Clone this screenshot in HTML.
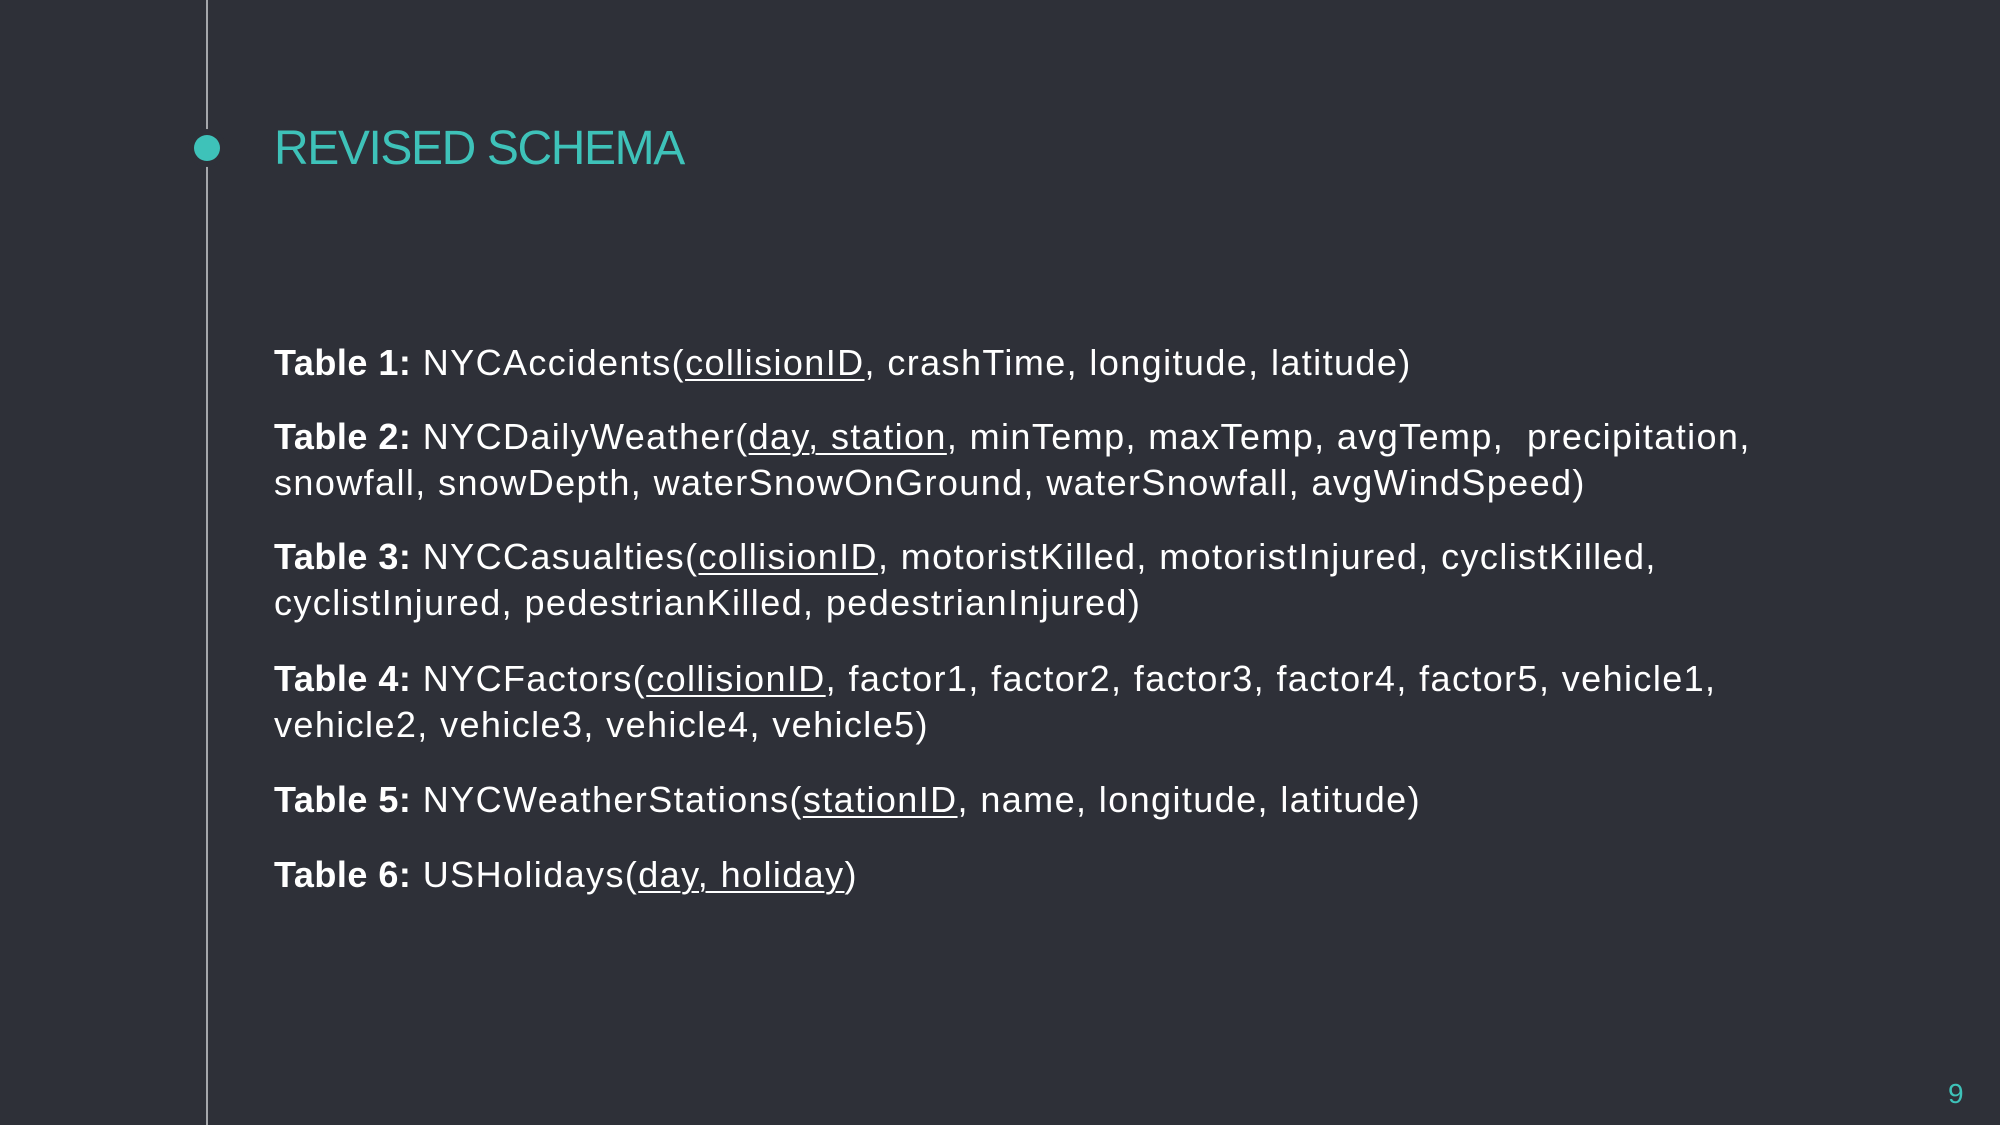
<!DOCTYPE html>
<html><head><style>
html,body{margin:0;padding:0}
body{width:2000px;height:1125px;background:#2e3038;position:relative;overflow:hidden;font-family:"Liberation Sans",sans-serif}
.line{position:absolute;left:206px;top:0;width:2px;height:1125px;background:#a5a7ab}
.dot{position:absolute;left:194px;top:135px;width:26px;height:26px;border-radius:50%;background:#3ec2b9;box-shadow:0 0 0 6px #2e3038}
h1{position:absolute;left:274px;top:121px;margin:0;font-weight:normal;font-size:48px;color:#3ec2b9;letter-spacing:-1.4px}
.p{position:absolute;left:274px;color:#fff;font-size:36px;line-height:46px;white-space:nowrap;letter-spacing:1.4px}
b{font-weight:bold;letter-spacing:0.5px}
u{text-decoration-thickness:2px;text-underline-offset:4px}
.n{position:absolute;left:1948px;top:1078px;color:#3ec2b9;font-size:28px}
</style></head><body>
<div class="line"></div><div class="dot"></div>
<h1>REVISED SCHEMA</h1>
<div class="p" style="top:340px"><b>Table 1:</b> NYCAccidents(<u>collisionID</u>, crashTime, longitude, latitude)</div>
<div class="p" style="top:414px"><b>Table 2:</b> NYCDailyWeather(<u>day, station</u>, minTemp, maxTemp, avgTemp,&nbsp; precipitation,<br>snowfall, snowDepth, waterSnowOnGround, waterSnowfall, avgWindSpeed)</div>
<div class="p" style="top:534px"><b>Table 3:</b> NYCCasualties(<u>collisionID</u>, motoristKilled, motoristInjured, cyclistKilled,<br>cyclistInjured, pedestrianKilled, pedestrianInjured)</div>
<div class="p" style="top:656px"><b>Table 4:</b> NYCFactors(<u>collisionID</u>, factor1, factor2, factor3, factor4, factor5, vehicle1,<br>vehicle2, vehicle3, vehicle4, vehicle5)</div>
<div class="p" style="top:777px"><b>Table 5:</b> NYCWeatherStations(<u>stationID</u>, name, longitude, latitude)</div>
<div class="p" style="top:852px"><b>Table 6:</b> USHolidays(<u>day, holiday</u>)</div>
<div class="n">9</div>
</body></html>
